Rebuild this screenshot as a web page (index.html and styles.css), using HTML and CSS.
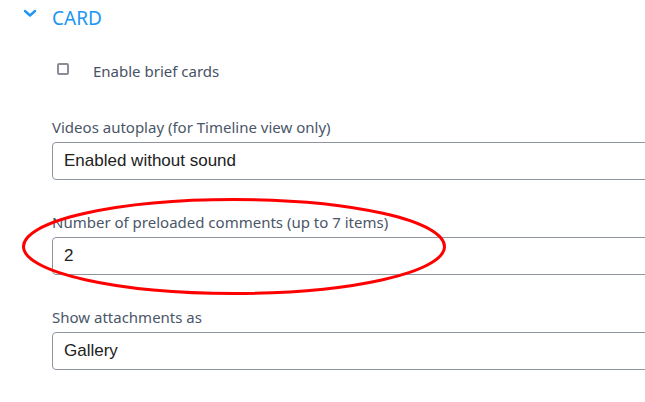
FILE: index.html
```html
<!DOCTYPE html>
<html>
<head>
<meta charset="utf-8">
<link rel="stylesheet" href="styles.css">
</head>
<body>
<div class="page">
  <div class="section-head">
    <svg class="chevron" width="14" height="10" viewBox="0 0 14 10"><path d="M2 3 L7 7.5 L12 3" fill="none" stroke="#2196f3" stroke-width="2.4" stroke-linecap="round" stroke-linejoin="round"/></svg>
    <span class="section-title">CARD</span>
  </div>
  <div class="section-body">
    <label class="check-row">
      <span class="checkbox"></span>
      <span class="check-label">Enable brief cards</span>
    </label>
    <div class="field">
      <div class="field-label">Videos autoplay (for Timeline view only)</div>
      <div class="input">Enabled without sound</div>
    </div>
    <div class="field">
      <div class="field-label">Number of preloaded comments (up to 7 items)</div>
      <div class="input">2</div>
    </div>
    <div class="field">
      <div class="field-label">Show attachments as</div>
      <div class="input">Gallery</div>
    </div>
  </div>
  <svg class="annotation" width="645" height="402" viewBox="0 0 645 402"><ellipse cx="234" cy="246.5" rx="210.5" ry="47" fill="none" stroke="#f00" stroke-width="3"/></svg>
</div>
</body>
</html>
```
FILE: styles.css
```css
html, body {
  margin: 0;
  padding: 0;
  background: #fff;
  overflow: hidden;
}
.page {
  position: relative;
  width: 645px;
  height: 402px;
  overflow: hidden;
  font-family: "Noto Sans", "Open Sans", sans-serif;
}
.section-head {
  display: flex;
  align-items: center;
  padding-top: 5px;
  height: 26px;
}
.chevron {
  margin-left: 23px;
  margin-right: 15px;
  margin-top: -10px;
}
.section-title {
  font-size: 19px;
  line-height: 26px;
  color: #2196f3;
}
.section-body {
  padding-left: 52px;
}
.check-row {
  display: flex;
  align-items: center;
  margin-top: 30px;
  height: 20px;
  padding-left: 5px;
}
.checkbox {
  box-sizing: border-box;
  width: 12px;
  height: 12px;
  border: 2px solid #8c8c96;
  border-radius: 2px;
  margin-right: 24px;
  margin-top: -4px;
}
.check-label {
  font-size: 15px;
  line-height: 20px;
  color: #465264;
}
.field {
  margin-top: 36px;
}
.field + .field {
  margin-top: 32px;
}
.field-label {
  font-size: 15px;
  line-height: 20px;
  color: #4a5668;
  margin-bottom: 5px;
}
.input {
  box-sizing: border-box;
  width: 640px;
  height: 38px;
  border: 1px solid #8e95a0;
  border-radius: 4px;
  padding-left: 11px;
  display: flex;
  align-items: center;
  font-family: "Liberation Sans", Arial, sans-serif;
  font-size: 17px;
  color: #212121;
}
.annotation {
  position: absolute;
  left: 0;
  top: 0;
  pointer-events: none;
}
```
